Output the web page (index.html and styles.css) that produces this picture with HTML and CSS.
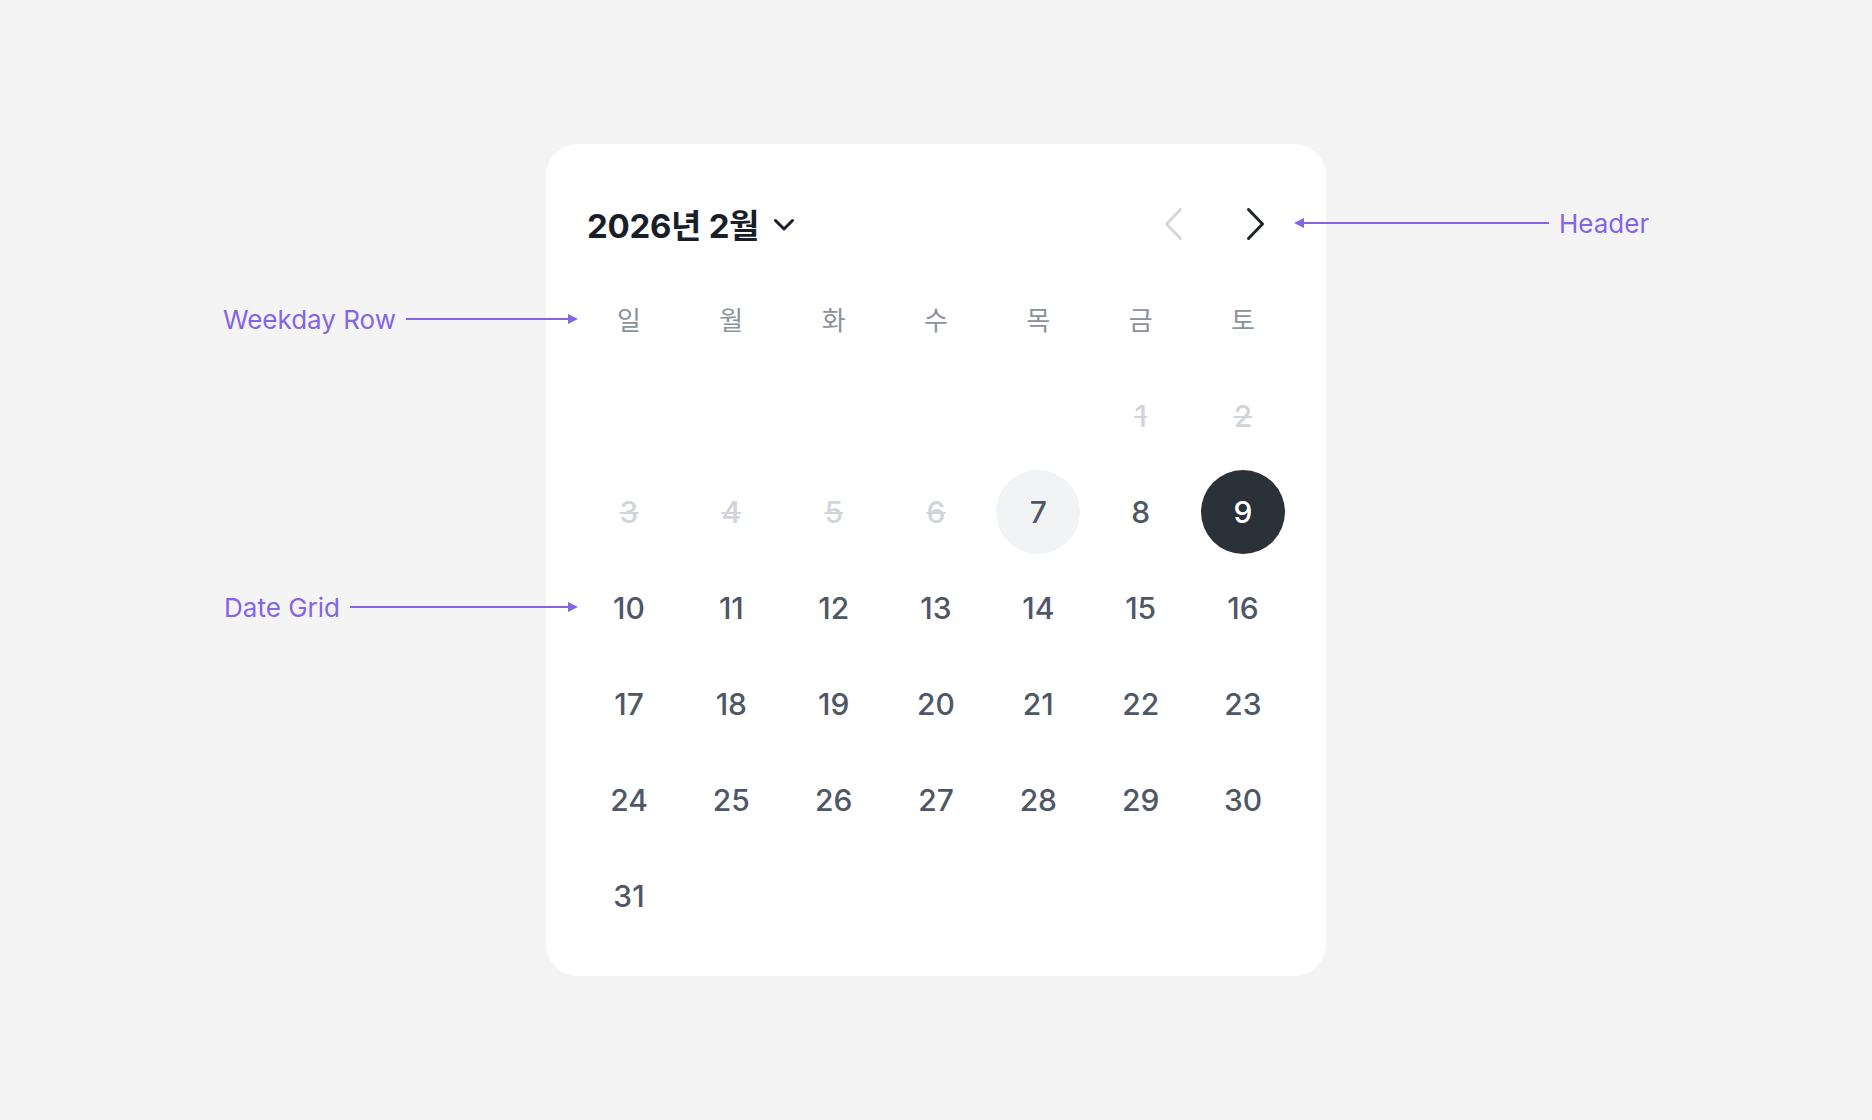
FILE: index.html
```html
<!DOCTYPE html>
<html lang="ko">
<head>
  <meta charset="utf-8">
  <title>Date Picker</title>
  <link rel="stylesheet" href="styles.css">
</head>
<body>

<div class="picker">

  <div class="picker-header">
    <button type="button" class="month-select">
      <span class="month-title">2026년 2월</span>
      <svg class="caret" width="24" height="24" viewBox="0 0 24 24">
        <path d="M3.5 7.5 L12 16 L20.5 7.5" fill="none" stroke="currentColor" stroke-width="3" stroke-linecap="round" stroke-linejoin="round"/>
      </svg>
    </button>
    <div class="nav">
      <button type="button" class="nav-btn disabled">
        <svg width="36" height="36" viewBox="0 0 36 36">
          <path d="M25.5 3.5 L11.5 18 L25.5 32.5" fill="none" stroke="currentColor" stroke-width="3" stroke-linecap="round" stroke-linejoin="round"/>
        </svg>
      </button>
      <button type="button" class="nav-btn">
        <svg width="36" height="36" viewBox="0 0 36 36">
          <path d="M10.5 3.5 L24.5 18 L10.5 32.5" fill="none" stroke="currentColor" stroke-width="3" stroke-linecap="round" stroke-linejoin="round"/>
        </svg>
      </button>
    </div>
  </div>

  <div class="weekdays">
    <span>일</span><span>월</span><span>화</span><span>수</span><span>목</span><span>금</span><span>토</span>
  </div>

  <div class="days">
    <span></span><span></span><span></span><span></span><span></span>
    <span class="day past">1</span>
    <span class="day past">2</span>
    <span class="day past">3</span>
    <span class="day past">4</span>
    <span class="day past">5</span>
    <span class="day past">6</span>
    <span class="day today">7</span>
    <span class="day">8</span>
    <span class="day selected">9</span>
    <span class="day">10</span>
    <span class="day">11</span>
    <span class="day">12</span>
    <span class="day">13</span>
    <span class="day">14</span>
    <span class="day">15</span>
    <span class="day">16</span>
    <span class="day">17</span>
    <span class="day">18</span>
    <span class="day">19</span>
    <span class="day">20</span>
    <span class="day">21</span>
    <span class="day">22</span>
    <span class="day">23</span>
    <span class="day">24</span>
    <span class="day">25</span>
    <span class="day">26</span>
    <span class="day">27</span>
    <span class="day">28</span>
    <span class="day">29</span>
    <span class="day">30</span>
    <span class="day">31</span>
  </div>

  <!-- callouts -->
  <div class="note note-right note-header">
    <i class="head"></i><i class="line"></i>
    <span>Header</span>
  </div>
  <div class="note note-left note-weekday">
    <span>Weekday Row</span>
    <i class="line"></i><i class="head"></i>
  </div>
  <div class="note note-left note-grid">
    <span>Date Grid</span>
    <i class="line"></i><i class="head"></i>
  </div>

</div>

</body>
</html>
```

FILE: styles.css
```css
body {
  margin: 0;
  min-height: 100vh;
  background-color: #f4f4f4;
  font-family: Inter, "Noto Sans CJK KR", sans-serif;
  display: flex;
  align-items: center;
  justify-content: center;
}

button {
  border: none;
  background: none;
  padding: 0;
  cursor: pointer;
  font: inherit;
}

.picker {
  position: relative;
  width: 780px;
  box-sizing: border-box;
  padding: 42px 41px 38px 41px;
  background-color: #fff;
  border-radius: 32px;
}

/* header: month title + arrows */
.picker-header {
  height: 76px;
  margin-bottom: 16px;
  display: flex;
  align-items: center;
  justify-content: space-between;
}

.month-select {
  display: flex;
  align-items: center;
  gap: 13px;
  color: #191f28;
}

.month-title {
  font-size: 33px;
  font-weight: 700;
  letter-spacing: -0.3px;
}

.caret {
  margin-top: 2px;
}

.nav {
  display: flex;
  gap: 25px;
}

.nav-btn {
  width: 58px;
  height: 76px;
  display: flex;
  align-items: center;
  justify-content: center;
  color: #1f2329;
}

.nav-btn.disabled {
  color: #d4d7dc;
}

/* weekday labels and the date cells share the same columns */
.weekdays, .days {
  display: grid;
  grid-template-columns: repeat(7, 84px);
  justify-content: space-between;
  grid-auto-rows: 84px;
  row-gap: 12px;
}

.weekdays {
  margin-bottom: 12px;
}

.weekdays span {
  display: flex;
  align-items: center;
  justify-content: center;
  padding-bottom: 3px;
  font-family: "Noto Sans CJK KR", sans-serif;
  font-size: 26px;
  color: #8b929c;
}

.day {
  display: flex;
  align-items: center;
  justify-content: center;
  border-radius: 50%;
  font-size: 30px;
  font-weight: 500;
  color: #4e5766;
}

.day.past {
  color: #d1d5db;
  text-decoration: line-through;
  text-decoration-thickness: 2px;
}

.day.today {
  background-color: #f2f3f5;
}

.day.selected {
  background-color: #2b3139;
  color: #fff;
}

/* annotation arrows */
.note {
  position: absolute;
  display: flex;
  align-items: center;
  font-family: Inter, sans-serif;
  font-size: 26px;
  color: #8564e6;
  white-space: nowrap;
  height: 32px;
  margin-top: -16px;
}

.note .line {
  height: 2px;
  background-color: #8564e6;
}

.note-left .head {
  width: 0;
  height: 0;
  border-top: 5.5px solid transparent;
  border-bottom: 5.5px solid transparent;
  border-left: 10px solid #8564e6;
}

.note-right .head {
  width: 0;
  height: 0;
  border-top: 5.5px solid transparent;
  border-bottom: 5.5px solid transparent;
  border-right: 10px solid #8564e6;
}

.note-left span {
  margin-right: 10px;
}

.note-right span {
  margin-left: 10px;
}

.note-header {
  left: 748px;
  top: 79px;
}

.note-header .line {
  width: 245px;
}

.note-weekday {
  right: calc(100% - 32px);
  top: 175px;
}

.note-weekday .line {
  width: 162px;
}

.note-grid {
  right: calc(100% - 32px);
  top: 463px;
}

.note-grid .line {
  width: 218px;
}
```
